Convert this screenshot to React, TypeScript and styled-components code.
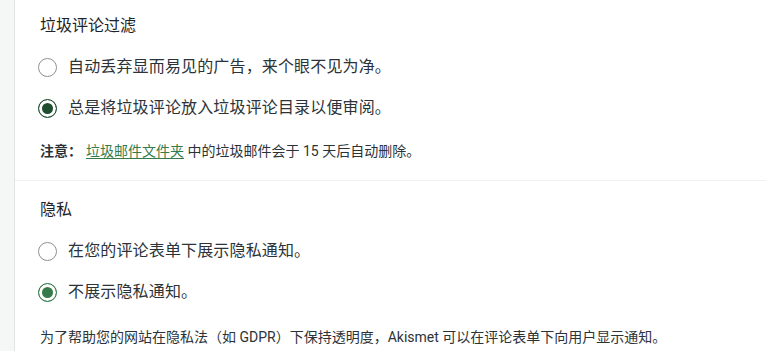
import React, { useState } from "react";
import styled, { createGlobalStyle } from "styled-components";

const GlobalStyle = createGlobalStyle`
  html, body {
    margin: 0;
    padding: 0;
    background: #ffffff;
  }
  body {
    font-family: "Roboto", "Noto Sans CJK SC", sans-serif;
    color: #2c3338;
  }
`;

const Page = styled.div`
  display: flex;
  width: 766px;
  height: 351px;
  overflow: hidden;
`;

const SideStrip = styled.div`
  width: 14px;
  flex-shrink: 0;
  background: #f5f6f6;
  border-right: 1px solid #e2e3e4;
`;

const Main = styled.div`
  flex: 1;
  display: flex;
  flex-direction: column;
`;

const Section = styled.section<{ $top: number; $bottom: number; $divider?: boolean }>`
  padding: ${(p) => p.$top}px 0 ${(p) => p.$bottom}px 25px;
  border-top: ${(p) => (p.$divider ? "1px solid #f0f0f1" : "none")};
`;

const Heading = styled.h3`
  margin: 0;
  font-size: 16px;
  line-height: 24px;
  font-weight: 400;
  color: #1d2327;
`;

const Options = styled.div`
  display: flex;
  flex-direction: column;
  gap: 17px;
  margin-top: 17px;
`;

const OptionRow = styled.label`
  display: flex;
  align-items: center;
  gap: 11px;
  height: 24px;
  font-size: 16px;
  line-height: 24px;
  letter-spacing: 0.15px;
  color: #2c3338;
  cursor: pointer;
`;

const Radio = styled.input<{ $tone: string }>`
  appearance: none;
  -webkit-appearance: none;
  box-sizing: border-box;
  margin: 0 0 0 -2px;
  width: 19px;
  height: 19px;
  min-width: 19px;
  border-radius: 50%;
  border: 1px solid #8c8f94;
  background: #fff;
  flex-shrink: 0;
  cursor: pointer;
  &:checked {
    border-color: ${(p) => p.$tone};
    background: ${(p) => p.$tone};
    box-shadow: inset 0 0 0 3px #fff;
  }
`;

const Note = styled.p<{ $gap: number }>`
  margin: ${(p) => p.$gap}px 0 0;
  font-size: 14px;
  line-height: 20px;
  color: #2c3338;
  strong {
    font-weight: 700;
    margin-right: 4px;
  }
  a {
    color: #357b49;
    text-decoration: underline;
    text-underline-offset: 2px;
  }
`;

type Opt = { label: string; tone: string };

const RadioGroup = ({ name, options, initial }: { name: string; options: Opt[]; initial: number }) => {
  const [value, setValue] = useState(initial);
  return (
    <Options>
      {options.map((o, i) => (
        <OptionRow key={i}>
          <Radio
            type="radio"
            name={name}
            $tone={o.tone}
            checked={value === i}
            onChange={() => setValue(i)}
          />
          {o.label}
        </OptionRow>
      ))}
    </Options>
  );
};

const App = () => {
  return (
    <>
      <GlobalStyle />
      <Page>
        <SideStrip />
        <Main>
          <Section $top={14} $bottom={19}>
            <Heading>垃圾评论过滤</Heading>
            <RadioGroup
              name="spam"
              initial={1}
              options={[
                { label: "自动丢弃显而易见的广告，来个眼不见为净。", tone: "#1f4d30" },
                { label: "总是将垃圾评论放入垃圾评论目录以便审阅。", tone: "#1f4d30" },
              ]}
            />
            <Note $gap={21}>
              <strong>注意：</strong>
              <a href="#">垃圾邮件文件夹</a> 中的垃圾邮件会于 15 天后自动删除。
            </Note>
          </Section>
          <Section $top={17} $bottom={0} $divider>
            <Heading>隐私</Heading>
            <RadioGroup
              name="privacy"
              initial={1}
              options={[
                { label: "在您的评论表单下展示隐私通知。", tone: "#357b49" },
                { label: "不展示隐私通知。", tone: "#357b49" },
              ]}
            />
            <Note $gap={23}>
              为了帮助您的网站在隐私法（如 GDPR）下保持透明度，Akismet 可以在评论表单下向用户显示通知。
            </Note>
          </Section>
        </Main>
      </Page>
    </>
  );
};

export default App;
